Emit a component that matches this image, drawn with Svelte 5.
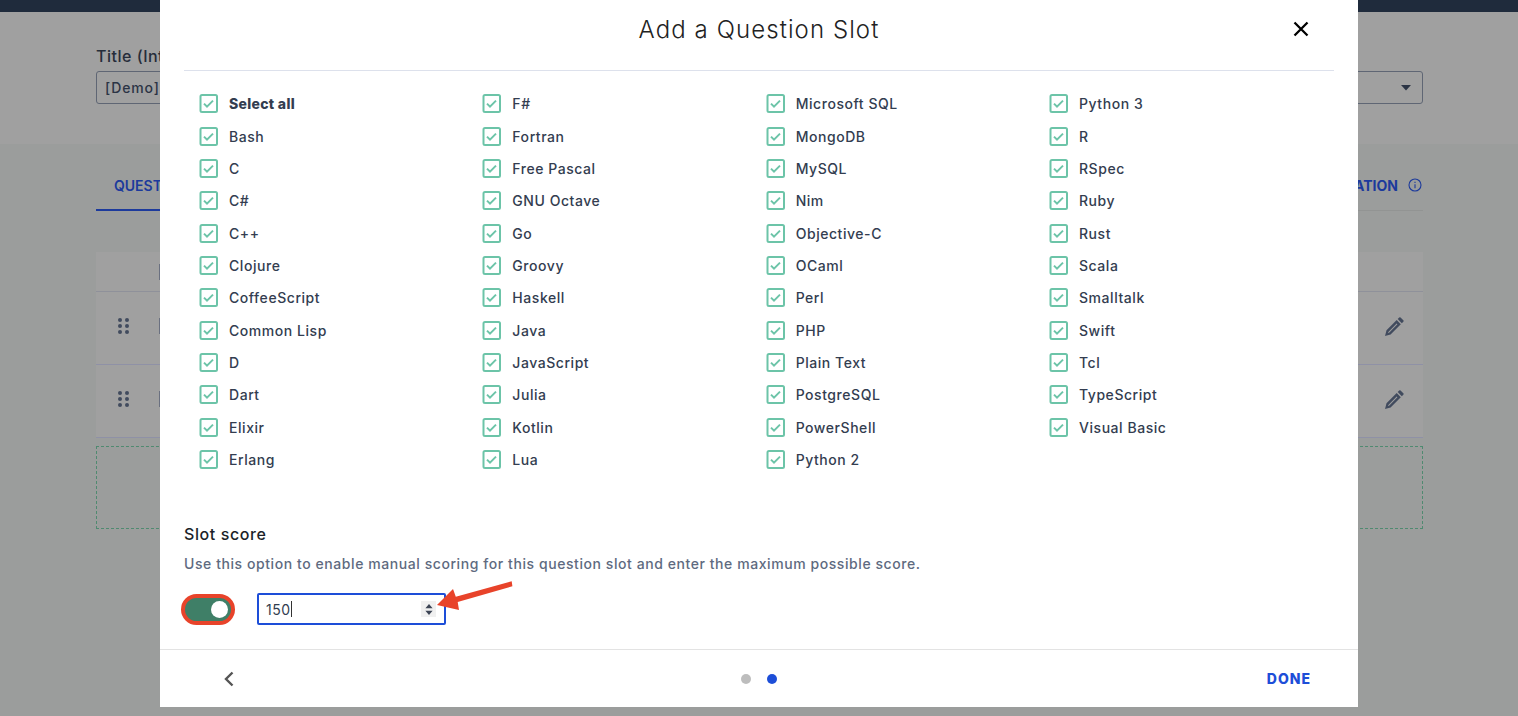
<script>
  const columns = [
    ['Select all','Bash','C','C#','C++','Clojure','CoffeeScript','Common Lisp','D','Dart','Elixir','Erlang'],
    ['F#','Fortran','Free Pascal','GNU Octave','Go','Groovy','Haskell','Java','JavaScript','Julia','Kotlin','Lua'],
    ['Microsoft SQL','MongoDB','MySQL','Nim','Objective-C','OCaml','Perl','PHP','Plain Text','PostgreSQL','PowerShell','Python 2'],
    ['Python 3','R','RSpec','Ruby','Rust','Scala','Smalltalk','Swift','Tcl','TypeScript','Visual Basic']
  ];
</script>

<div class="page">
  <div class="topbar"></div>
  <section class="titlearea">
    <div class="label">Title (Internal)</div>
    <div class="select">
      <span>[Demo]</span>
      <svg class="caret" width="10" height="6" viewBox="0 0 10 6"><path d="M0 0h10L5 5.500z" fill="#2b3445"/></svg>
    </div>
  </section>
  <section class="content">
    <div class="tabs">
      <div class="tab active">QUESTIONS</div>
      <div class="tab right">
        <span>INFORMATION</span>
        <svg width="14" height="14" viewBox="0 0 14 14" fill="none" stroke="#1c3a9c" stroke-width="1.1"><circle cx="7" cy="7" r="6"/><path d="M7 6.200v4M7 3.800v1.200"/></svg>
      </div>
    </div>
    <div class="table">
      <div class="thead"><span class="bar"></span></div>
      {#each [0,1] as r (r)}
        <div class="row">
          <svg class="grip" width="11" height="16" viewBox="0 0 11 16" fill="#414b5e">
            <circle cx="2" cy="2" r="2"/><circle cx="9" cy="2" r="2"/>
            <circle cx="2" cy="8" r="2"/><circle cx="9" cy="8" r="2"/>
            <circle cx="2" cy="14" r="2"/><circle cx="9" cy="14" r="2"/>
          </svg>
          <span class="bar"></span>
          <svg class="pen" width="19" height="19" viewBox="0 0 19 19" fill="#414b5e">
            <path d="M14.200 .6a1 1 0 0 1 1.400 0l2.700 2.700a1 1 0 0 1 0 1.400l-1.500 1.500-4.100-4.100z"/>
            <path fill-rule="evenodd" d="M11.700 3.100l4.100 4.100L5.600 17.400 0 19l1.500-5.700zM11.700 6.600L3.600 14.700l-.8 1.500 1.500-.8 8.100-8.100z"/>
          </svg>
        </div>
      {/each}
    </div>
    <div class="dropzone"></div>
  </section>
</div>

<div class="modal">
  <header class="mhead">
    <h1>Add a Question Slot</h1>
    <svg class="close" width="16" height="16" viewBox="0 0 16 16" stroke="#000" stroke-width="2.300" fill="none"><path d="M1.500 1.500l13 13M14.500 1.500l-13 13"/></svg>
  </header>
  <div class="grid">
    {#each columns as col, c (c)}
      <div class="col">
        {#each col as name, i (name)}
          <div class="item">
            <svg class="check" width="19" height="19" viewBox="0 0 19 19" fill="none">
              <rect x="1.500" y="1" width="16.500" height="17" rx="1.500" stroke="#6cc4a8" stroke-width="2"/>
              <path d="M5 9.600l3 3 6-6" stroke="#6cc4a8" stroke-width="2"/>
            </svg>
            <span class:bold={c === 0 && i === 0}>{name}</span>
          </div>
        {/each}
      </div>
    {/each}
  </div>
  <div class="score">
    <h2>Slot score</h2>
    <p>Use this option to enable manual scoring for this question slot and enter the maximum possible score.</p>
    <div class="controls">
      <div class="toggle"><span class="knob"></span></div>
      <div class="input">
        <span class="value">150</span><span class="cursor"></span>
        <span class="spin">
          <svg width="8" height="11" viewBox="0 0 8 11" fill="#3d4555"><path d="M4 0l3.600 4.200H.4zM4 11L.4 6.800h7.200z"/></svg>
        </span>
      </div>
    </div>
    <svg class="arrow" width="76" height="33" viewBox="0 0 76 33" fill="#e8432a">
      <path d="M0 27L16 11 18.800 18.800 74.700 3.300l.7 5L20.700 24 22 32z"/>
    </svg>
  </div>
  <footer class="mfoot">
    <svg class="back" width="12" height="18" viewBox="0 0 12 18" fill="none" stroke="#555" stroke-width="2.400"><path d="M9.500 2.500L3 9l6.500 6.500"/></svg>
    <div class="dots"><span class="dot"></span><span class="dot on"></span></div>
    <div class="done">DONE</div>
  </footer>
</div>

<style>
  :global(body) {
    margin: 0;
    background: #9b9d9c;
    overflow: hidden;
    font-family: "Inter", "Noto Sans", "Liberation Sans", sans-serif;
  }
  .page {
    height: 716px;
    overflow: hidden;
    background: #9b9d9c;
  }
  .topbar { height: 12px; background: #1f2b3c; }
  .titlearea {
    height: 132px;
    box-sizing: border-box;
    background: #a0a0a0;
    padding: 33px 95px 0 96px;
  }
  .label {
    font-size: 16px;
    line-height: 22px;
    font-weight: 500;
    letter-spacing: 0.5px;
    color: #262d3a;
  }
  .select {
    margin-top: 4px;
    height: 33px;
    box-sizing: border-box;
    border: 1px solid #5f6674;
    border-radius: 3px;
    display: flex;
    align-items: center;
    justify-content: space-between;
    padding: 0 11px 0 8px;
    font-size: 14px;
    letter-spacing: 0.9px;
    font-weight: 500;
    color: #2b3445;
  }
  .content { padding: 0 95px 0 96px; }
  .tabs {
    height: 67px;
    display: flex;
    justify-content: space-between;
    align-items: flex-end;
    border-bottom: 1px solid #929493;
    box-sizing: border-box;
  }
  .tab {
    font-size: 14px;
    font-weight: 600;
    color: #1c3a9c;
    display: flex;
    align-items: center;
    gap: 10px;
    height: 50px;
    box-sizing: border-box;
  }
  .tab.active { border-bottom: 2px solid #1c3a9c; width: 120px; padding: 0 0 0 18px; margin-bottom: -1px; }
  .tab.right { font-weight: 700; padding-right: 1px; }
  .table { margin-top: 41px; background: #a0a0a0; }
  .thead {
    height: 40px;
    box-sizing: border-box;
    border-bottom: 1px solid #8f919a;
    display: flex;
    align-items: center;
    padding-left: 63px;
  }
  .row {
    height: 73px;
    box-sizing: border-box;
    border-bottom: 1px solid #8f91a6;
    display: flex;
    align-items: center;
    padding: 0 19px 4px 22px;
  }
  .grip { flex: none; }
  .row .bar { margin-left: 30px; }
  .bar { display: block; width: 2px; height: 16px; background: #6a7080; }
  .pen { margin-left: auto; }
  .dropzone {
    margin-top: 8px;
    height: 83px;
    box-sizing: border-box;
    border: 1px dashed #4f8a70;
  }

  .modal {
    position: absolute;
    left: 160px;
    top: 0;
    width: 1198px;
    height: 707px;
    background: #fff;
    color: #333d50;
    font-size: 14px;
  }
  .mhead {
    height: 71px;
    margin: 0 24px;
    box-sizing: border-box;
    border-bottom: 1px solid #dde1ec;
    display: flex;
    align-items: center;
    justify-content: center;
    position: relative;
  }
  h1 {
    margin: 0 0 11px;
    font-size: 24px;
    font-weight: 300;
    letter-spacing: 1.08px;
    color: #222;
  }
  .close { position: absolute; right: 25px; top: 21px; }
  .grid {
    display: grid;
    grid-template-columns: repeat(4, 283.33px);
    padding: 16.5px 0 0 39px;
    height: 417px;
    box-sizing: border-box;
  }
  .item {
    height: 32.36px;
    display: flex;
    align-items: center;
    gap: 11px;
    font-weight: 500;
    letter-spacing: 0.55px;
    white-space: nowrap;
  }
  .check { flex: none; }
  .bold { font-weight: 800; letter-spacing: 0.3px; }
  .score { padding: 15px 24px 0; position: relative; height: 161px; box-sizing: border-box; }
  h2 {
    margin: 0;
    padding-top: 20px;
    font-size: 16px;
    line-height: 22px;
    font-weight: 500;
    letter-spacing: 0.6px;
    color: #1b1f29;
  }
  p {
    margin: 9px 0 0;
    font-size: 14px;
    line-height: 20px;
    font-weight: 500;
    letter-spacing: 0.57px;
    color: #5e6a80;
  }
  .controls { display: flex; align-items: center; margin-top: 19px; margin-left: -3px; gap: 22px; }
  .toggle {
    width: 54px;
    height: 31px;
    box-sizing: border-box;
    border: 4px solid #e8432a;
    border-radius: 16px;
    background: #3f7f67;
    display: flex;
    align-items: center;
    justify-content: flex-end;
    padding-right: 3px;
  }
  .knob { width: 17px; height: 17px; border-radius: 50%; background: #fff; }
  .input {
    width: 189px;
    height: 32px;
    box-sizing: border-box;
    border: 2px solid #1d4ed8;
    border-radius: 2px;
    display: flex;
    align-items: center;
    padding-left: 7px;
    font-size: 14px;
    letter-spacing: 0.5px;
    color: #333d50;
  }
  .cursor { width: 1px; height: 16px; background: #333; }
  .spin {
    margin-left: auto;
    margin-right: 8px;
    width: 15px;
    height: 16px;
    background: #f0f0f0;
    display: flex;
    align-items: center;
    justify-content: center;
  }
  .arrow { position: absolute; left: 277px; top: 90px; }
  .mfoot {
    height: 58px;
    border-top: 1px solid #e3e3e3;
    box-sizing: border-box;
    display: flex;
    align-items: center;
    padding: 0 47px 0 63px;
    justify-content: space-between;
  }
  .dots { display: flex; gap: 16px; margin-left: 17px; }
  .dot { width: 10px; height: 10px; border-radius: 50%; background: #bdbdbd; }
  .dot.on { background: #1d4ed8; }
  .done { font-size: 14px; font-weight: 800; color: #1d4ed8; letter-spacing: 1px; }
</style>
